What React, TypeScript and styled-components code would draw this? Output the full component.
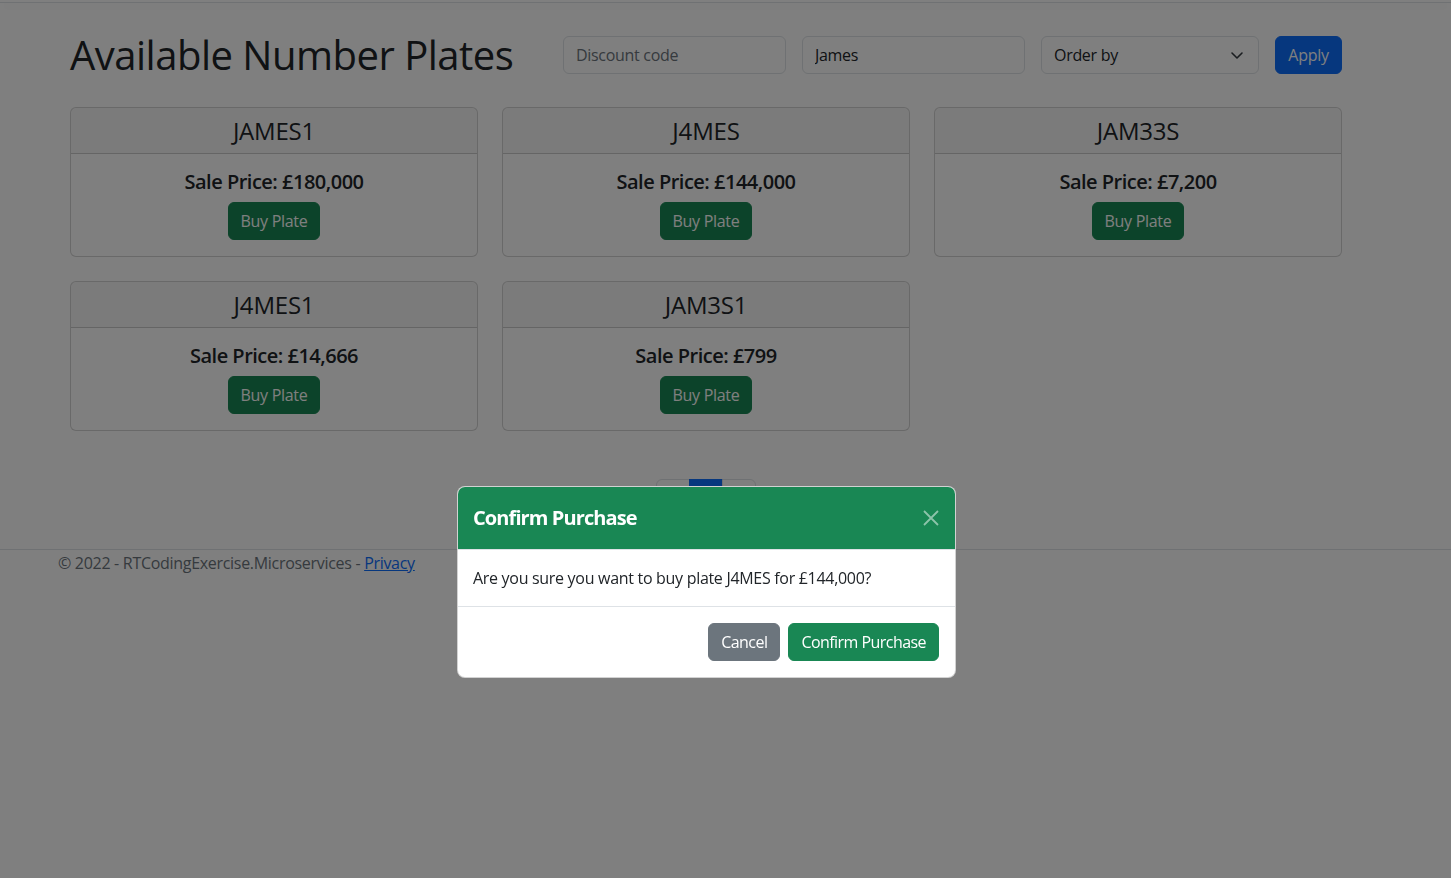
import React from "react";
import styled, { createGlobalStyle } from "styled-components";

const GlobalStyle = createGlobalStyle`
  *, *::before, *::after { box-sizing: border-box; }
  html, body { margin: 0; padding: 0; }
  body {
    font-family: "Open Sans", "Noto Sans", sans-serif;
    font-size: 16px;
    line-height: 1.5;
    letter-spacing: -0.3px;
    color: #212529;
    background: #fff;
    min-height: 878px;
  }
`;

const TopBar = styled.header`
  height: 3px;
  border-bottom: 1px solid #dee2e6;
  box-shadow: 0 4px 12px rgba(0, 0, 0, 0.05);
`;

const Container = styled.div`
  margin-left: 46px;
  width: 1320px;
  padding: 0 12px;
`;

const Main = styled.main`
  padding: 0 12px;
`;

const Toolbar = styled.div`
  display: flex;
  justify-content: space-between;
  align-items: center;
  padding-top: 28px;
`;

const Title = styled.h1`
  margin: 0;
  font-size: 40px;
  font-weight: 500;
  line-height: 48px;
  letter-spacing: -0.5px;
`;

const Filters = styled.form`
  display: flex;
  gap: 16px;
`;

const TextInput = styled.input<{ $w: number }>`
  width: ${(p) => p.$w}px;
  height: 38px;
  padding: 6px 12px;
  font: inherit;
  font-size: 16px;
  letter-spacing: -0.3px;
  color: #212529;
  background: #fff;
  border: 1px solid #dee2e6;
  border-radius: 6px;
  outline: none;
  &::placeholder { color: #6c757d; opacity: 1; }
`;

const SelectBox = styled.div`
  width: 218px;
  height: 38px;
  padding: 6px 14px 6px 12px;
  display: flex;
  align-items: center;
  justify-content: space-between;
  border: 1px solid #dee2e6;
  border-radius: 6px;
  background: #fff;
  color: #212529;
`;

const Btn = styled.button<{ $variant: "primary" | "success" | "secondary"; $w?: number }>`
  display: block;
  height: 38px;
  ${(p) => (p.$w ? `width: ${p.$w}px;` : "")}
  padding: 6px 12px;
  font: inherit;
  font-size: 16px;
  line-height: 24px;
  letter-spacing: -0.3px;
  color: #fff;
  border-radius: 6px;
  cursor: pointer;
  white-space: nowrap;
  background: ${(p) =>
    p.$variant === "primary" ? "#0d6efd" : p.$variant === "success" ? "#198754" : "#6c757d"};
  border: 1px solid
    ${(p) =>
      p.$variant === "primary" ? "#0d6efd" : p.$variant === "success" ? "#198754" : "#6c757d"};
`;

const Grid = styled.div`
  margin-top: 28px;
  display: grid;
  grid-template-columns: repeat(3, 1fr);
  gap: 24px;
`;

const Card = styled.div`
  border: 1px solid rgba(0, 0, 0, 0.175);
  border-radius: 6px;
  background: #fff;
  overflow: hidden;
  text-align: center;
`;

const CardHeader = styled.div`
  padding: 8px 16px;
  background: rgba(0, 0, 0, 0.03);
  border-bottom: 1px solid rgba(0, 0, 0, 0.175);
`;

const PlateName = styled.h4`
  margin: 0;
  font-size: 24px;
  font-weight: 500;
  line-height: 29px;
  letter-spacing: -0.2px;
`;

const CardBody = styled.div`
  padding: 16px;
  display: flex;
  flex-direction: column;
  align-items: center;
`;

const Price = styled.h5`
  margin: 0 0 8px;
  font-size: 20px;
  font-weight: 600;
  line-height: 24px;
  letter-spacing: -0.5px;
`;

const Pager = styled.ul`
  list-style: none;
  margin: 48px 0 0;
  padding: 0;
  display: flex;
  justify-content: center;
`;

const PageLink = styled.li<{ $active?: boolean; $pos: "first" | "mid" | "last" }>`
  height: 38px;
  padding: 6px 12px;
  line-height: 24px;
  margin-left: ${(p) => (p.$pos === "first" ? "0" : "-1px")};
  border: 1px solid ${(p) => (p.$active ? "#0d6efd" : "#dee2e6")};
  background: ${(p) => (p.$active ? "#0d6efd" : "#fff")};
  color: ${(p) => (p.$active ? "#fff" : "#0d6efd")};
  border-radius: ${(p) =>
    p.$pos === "first" ? "6px 0 0 6px" : p.$pos === "last" ? "0 6px 6px 0" : "0"};
`;

const Footer = styled.footer`
  margin-top: 32px;
  border-top: 1px solid #dee2e6;
  color: #6c757d;
  line-height: 26px;
`;

const FooterInner = styled.div`
  margin-left: 46px;
  padding: 0 12px;
`;

const Link = styled.a`
  color: #0d6efd;
  text-decoration: underline;
`;

const Backdrop = styled.div`
  position: fixed;
  inset: 0;
  background: rgba(0, 0, 0, 0.5);
  z-index: 1050;
`;

const Modal = styled.div`
  position: fixed;
  top: 486px;
  left: 457px;
  width: 499px;
  background: #fff;
  border: 1px solid rgba(0, 0, 0, 0.175);
  border-radius: 8px;
  overflow: hidden;
  z-index: 1055;
`;

const ModalHeader = styled.div`
  display: flex;
  align-items: center;
  justify-content: space-between;
  padding: 16px 16px 16px 15px;
  background: #198754;
  color: #fff;
  border-bottom: 1px solid #dee2e6;
`;

const ModalTitle = styled.h5`
  margin: 0;
  font-size: 20px;
  font-weight: 700;
  line-height: 30px;
  letter-spacing: -0.9px;
`;

const CloseBtn = styled.button`
  width: 24px;
  height: 24px;
  padding: 4px;
  margin: -4px -4px -4px auto;
  border: 0;
  background: transparent;
  display: flex;
  align-items: center;
  justify-content: center;
  opacity: 0.5;
  cursor: pointer;
`;

const ModalBody = styled.div`
  padding: 16px 15px;
  font-size: 16px;
  line-height: 24px;
`;

const ModalFooter = styled.div`
  display: flex;
  justify-content: flex-end;
  gap: 8px;
  padding: 16px;
  border-top: 1px solid #dee2e6;
`;

const ModalBtn = styled(Btn)`
  letter-spacing: -0.55px;
`;

const plates = [
  { name: "JAMES1", price: "£180,000" },
  { name: "J4MES", price: "£144,000" },
  { name: "JAM33S", price: "£7,200" },
  { name: "J4MES1", price: "£14,666" },
  { name: "JAM3S1", price: "£799" },
];

export default function App() {
  return (
    <>
      <GlobalStyle />
      <TopBar />
      <Container>
        <Main>
          <Toolbar>
            <Title>Available Number Plates</Title>
            <Filters onSubmit={(e) => e.preventDefault()}>
              <TextInput $w={223} placeholder="Discount code" />
              <TextInput $w={223} defaultValue="James" />
              <SelectBox>
                <span>Order by</span>
                <svg width="14" height="10" viewBox="0 0 14 10" fill="none">
                  <path d="M2 3l5 5 5-5" stroke="#343a40" strokeWidth="1.6" strokeLinecap="round" strokeLinejoin="round" />
                </svg>
              </SelectBox>
              <Btn $variant="primary" $w={67} type="submit">Apply</Btn>
            </Filters>
          </Toolbar>
          <Grid>
            {plates.map((p) => (
              <Card key={p.name}>
                <CardHeader>
                  <PlateName>{p.name}</PlateName>
                </CardHeader>
                <CardBody>
                  <Price>Sale Price: {p.price}</Price>
                  <Btn $variant="success">Buy Plate</Btn>
                </CardBody>
              </Card>
            ))}
          </Grid>
          <Pager>
            <PageLink $pos="first">«</PageLink>
            <PageLink $pos="mid" $active>1</PageLink>
            <PageLink $pos="last">»</PageLink>
          </Pager>
        </Main>
      </Container>
      <Footer>
        <FooterInner>
          © 2022 - RTCodingExercise.Microservices - <Link href="#">Privacy</Link>
        </FooterInner>
      </Footer>
      <Backdrop />
      <Modal>
        <ModalHeader>
          <ModalTitle>Confirm Purchase</ModalTitle>
          <CloseBtn aria-label="Close">
            <svg width="16" height="16" viewBox="0 0 16 16">
              <path d="M1 1L15 15M15 1L1 15" stroke="#fff" strokeWidth="1.8" />
            </svg>
          </CloseBtn>
        </ModalHeader>
        <ModalBody>Are you sure you want to buy plate J4MES for £144,000?</ModalBody>
        <ModalFooter>
          <ModalBtn $variant="secondary">Cancel</ModalBtn>
          <ModalBtn $variant="success">Confirm Purchase</ModalBtn>
        </ModalFooter>
      </Modal>
    </>
  );
}
